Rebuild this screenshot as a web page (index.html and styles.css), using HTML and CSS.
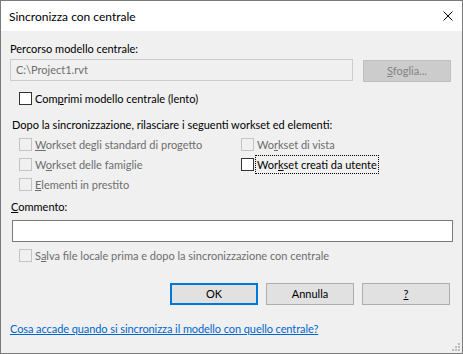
FILE: index.html
```html
<!DOCTYPE html>
<html lang="it">
<head>
  <meta charset="UTF-8" />
  <title>Sincronizza con centrale</title>
  <link rel="stylesheet" href="styles.css">
</head>
<body>
  <div class="window">
    <div class="titlebar">
      <span class="title">Sincronizza con centrale</span>
      <svg class="close" width="10" height="10" viewBox="0 0 10 10">
        <path d="M0.5 0.5 L9.5 9.5 M9.5 0.5 L0.5 9.5" stroke="#000" stroke-width="1" fill="none" />
      </svg>
    </div>

    <div class="content">
      <div class="label path-label">Percorso modello centrale:</div>
      <div class="path-row">
        <div class="field disabled">C:\Project1.rvt</div>
        <div class="btn btn-disabled browse"><u>S</u>foglia...</div>
      </div>

      <div class="check compress">
        <span class="box"></span>
        <span class="text">Com<u>p</u>rimi modello centrale (lento)</span>
      </div>

      <div class="label release-label">Dopo la sincronizzazione, rilasciare i seguenti workset ed elementi:</div>
      <div class="release-grid">
        <div class="check off">
          <span class="box"></span>
          <span class="text"><u>W</u>orkset degli standard di progetto</span>
        </div>
        <div class="check off">
          <span class="box"></span>
          <span class="text">Wo<u>r</u>kset di vista</span>
        </div>
        <div class="check off">
          <span class="box"></span>
          <span class="text">W<u>o</u>rkset delle famiglie</span>
        </div>
        <div class="check">
          <span class="box"></span>
          <span class="text focused">Wor<u>k</u>set creati da utente</span>
        </div>
        <div class="check off">
          <span class="box"></span>
          <span class="text"><u>E</u>lementi in prestito</span>
        </div>
      </div>

      <div class="label comment-label"><u>C</u>ommento:</div>
      <div class="field comment"></div>

      <div class="check off save">
        <span class="box"></span>
        <span class="text">S<u>a</u>lva file locale prima e dopo la sincronizzazione con centrale</span>
      </div>

      <div class="actions">
        <div class="btn btn-default">OK</div>
        <div class="btn">Annulla</div>
        <div class="btn"><u>?</u></div>
      </div>

      <a class="help" href="#">Cosa accade quando si sincronizza il modello con quello centrale?</a>
    </div>

    <svg class="grip" width="9" height="9" viewBox="0 0 9 9">
      <rect x="6" y="0" width="2" height="2" fill="#bcbcbc" />
      <rect x="3" y="3" width="2" height="2" fill="#bcbcbc" />
      <rect x="6" y="3" width="2" height="2" fill="#bcbcbc" />
      <rect x="0" y="6" width="2" height="2" fill="#bcbcbc" />
      <rect x="3" y="6" width="2" height="2" fill="#bcbcbc" />
      <rect x="6" y="6" width="2" height="2" fill="#bcbcbc" />
    </svg>
  </div>
</body>
</html>
```

FILE: styles.css
```css
body {
  margin: 0;
  font-family: "Segoe UI", Lato, sans-serif;
  font-size: 11px;
  color: #000;
}

.window {
  position: relative;
  width: 463px;
  height: 354px;
  box-sizing: border-box;
  border: 1px solid #7a7a7a;
  background: #f0f0f0;
  overflow: hidden;
}

.titlebar {
  height: 30px;
  background: #fff;
  display: flex;
  align-items: center;
  justify-content: space-between;
  padding: 0 9px 0 8px;
}

.title {
  font-size: 12px;
  line-height: 15px;
  margin-top: 1px;
}

.close {
  display: block;
}

.content {
  padding: 10px 11px 0 9px;
}

.label {
  line-height: 15px;
}

.path-label {
  margin-bottom: 3px;
}

.path-row {
  display: flex;
  gap: 10px;
  align-items: flex-start;
}

.field {
  box-sizing: border-box;
  height: 22px;
  line-height: 20px;
  padding: 0 5px;
  background: #fff;
  border: 1px solid #7a7a7a;
}

.field.disabled {
  width: 343px;
  background: #f0f0f0;
  border-color: #cccccc;
  color: #6d6d6d;
}

.btn {
  box-sizing: border-box;
  width: 88px;
  height: 22px;
  line-height: 20px;
  text-align: center;
  background: #e1e1e1;
  border: 1px solid #adadad;
}

.btn-disabled {
  background: #cccccc;
  border-color: #bfbfbf;
  color: #838383;
}

.browse {
  margin-top: 1px;
}

.btn-default {
  border: 2px solid #0078d7;
  line-height: 18px;
}

.check {
  display: flex;
  align-items: center;
  height: 20px;
  padding-left: 9px;
}

.box {
  box-sizing: border-box;
  width: 13px;
  height: 13px;
  border: 1px solid #333;
  background: #fff;
  margin-right: 3px;
  flex-shrink: 0;
}

.text {
  line-height: 15px;
}

.check.off .box {
  border-color: #c4c4c4;
  background: #f0f0f0;
}

.check.off .text {
  color: #6d6d6d;
}

.focused {
  outline: 1px dotted #000;
  outline-offset: 1px;
}

.compress {
  margin-top: 6px;
}

.release-label {
  margin-top: 9px;
  padding-left: 2px;
}

.release-grid {
  display: grid;
  grid-template-columns: 222px 1fr;
  margin-top: 2px;
}

.comment-label {
  margin-top: 5px;
  padding-left: 1px;
}

.comment {
  margin: 6px 0 0 2px;
  width: 441px;
}

.save {
  margin-top: 3px;
}

.actions {
  display: flex;
  justify-content: flex-end;
  gap: 8px;
  margin-top: 18px;
  padding-right: 1px;
}

.help {
  display: inline-block;
  margin-top: 16px;
  line-height: 15px;
  letter-spacing: -0.08px;
  color: #0066cc;
}

.grip {
  position: absolute;
  right: 1px;
  bottom: 1px;
}
```
